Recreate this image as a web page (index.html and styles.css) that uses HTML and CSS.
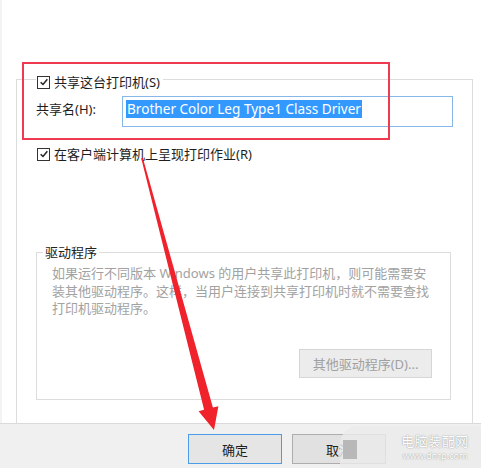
FILE: index.html
```html
<!DOCTYPE html>
<html lang="zh-CN">
<head>
<meta charset="utf-8">
<title>共享</title>
<link rel="stylesheet" href="styles.css">
</head>
<body>
<div class="page">
  <div class="main">
    <div class="panel">
      <div class="check-row legend">
        <span class="cb"><svg viewBox="0 0 12 12" width="10" height="10"><path d="M2 6.2 L4.8 9 L10 2.8" fill="none" stroke="#222" stroke-width="1.8"/></svg></span>
        <span class="label">共享这台打印机(S)</span>
      </div>
      <div class="name-row">
        <span class="name-label">共享名(H):</span>
        <div class="field"><span class="sel">Brother Color Leg Type1 Class Driver</span></div>
      </div>
      <div class="check-row render">
        <span class="cb"><svg viewBox="0 0 12 12" width="10" height="10"><path d="M2 6.2 L4.8 9 L10 2.8" fill="none" stroke="#222" stroke-width="1.8"/></svg></span>
        <span class="label">在客户端计算机上呈现打印作业(R)</span>
      </div>
      <div class="group">
        <div class="group-title">驱动程序</div>
        <p class="group-text">如果运行不同版本 Windows 的用户共享此打印机，则可能需要安<br>装其他驱动程序。这样，当用户连接到共享打印机时就不需要查找<br>打印机驱动程序。</p>
        <div class="group-actions"><span class="btn disabled">其他驱动程序(D)...</span></div>
      </div>
    </div>
  </div>
  <div class="footer">
    <span class="btn primary">确定</span>
    <span class="btn">取消</span>
  </div>

  <div class="highlight"></div>
  <svg class="arrow" width="481" height="468" viewBox="0 0 481 468">
    <polygon points="141.2,158.2 142.8,157.8 212.9,407.6 218.4,406.2 214,430 198.6,411.2 204.1,409.8" fill="#f0222c"/>
  </svg>
  <div class="watermark">
    <span class="wm-block"></span>
    <div class="wm-text">
      <span class="wm-name">电脑装配网</span>
      <span class="wm-url">www.dnzp.com</span>
    </div>
  </div>
</div>
</body>
</html>
```
FILE: styles.css
```css
* { box-sizing: border-box; }
html, body { margin: 0; padding: 0; background: #fff; }
body {
  font-family: "Noto Sans", "Noto Sans CJK SC", sans-serif;
  font-size: 13px;
  color: #1e1e1e;
}
.page {
  position: relative;
  width: 481px;
  height: 468px;
  display: flex;
  flex-direction: column;
  overflow: hidden;
}
.main {
  flex: 1;
  display: flex;
  padding: 79px 8px 0 14px;
  border-left: 2px solid #f3f3f3;
}
.panel {
  flex: 1;
  border: 1px solid #dcdcdc;
  border-bottom: none;
  display: flex;
  flex-direction: column;
}
.check-row {
  display: flex;
  align-items: center;
  gap: 4px;
  height: 18px;
  line-height: 18px;
}
.legend {
  margin: -7px 0 0 19px;
  padding: 0 3px 0 1px;
  background: #fff;
  align-self: flex-start;
}
.cb {
  width: 13px;
  height: 13px;
  border: 1px solid #333;
  background: #fff;
  display: flex;
  align-items: center;
  justify-content: center;
}
.name-row {
  display: flex;
  align-items: flex-start;
  margin: 5px 0 0 19px;
}
.name-label {
  width: 86px;
  line-height: 18px;
  margin-top: 4px;
}
.field {
  width: 331px;
  height: 31px;
  border: 1px solid #86b7e8;
  padding: 2px 3px 0;
  font-size: 13.6px;
}
.sel {
  display: inline-block;
  background: #3399ff;
  color: #fff;
  line-height: 18px;
  padding: 0 1px;
}
.render {
  margin: 18px 0 0 20px;
}
.group {
  margin: 89px 21px 0 19px;
  height: 148px;
  border: 1px solid #dcdcdc;
  display: flex;
  flex-direction: column;
}
.group-title {
  align-self: flex-start;
  margin: -10px 0 0 6px;
  padding: 0 2px;
  background: #fff;
  line-height: 18px;
  color: #222;
}
.group-text {
  margin: 4px 0 0 15px;
  line-height: 17.5px;
  color: #a2a2a2;
  white-space: nowrap;
}
.group-actions {
  display: flex;
  justify-content: flex-end;
  margin: 31px 18px 0 0;
}
.btn {
  display: flex;
  align-items: center;
  justify-content: center;
  height: 30px;
  border: 1px solid #adadad;
  background: #e1e1e1;
  color: #1e1e1e;
}
.btn.disabled {
  width: 133px;
  height: 29px;
  background: #ececec;
  border-color: #d6d6d6;
  color: #a0a0a0;
}
.footer {
  height: 45px;
  background: #f0f0f0;
  border-top: 1px solid #dadada;
  display: flex;
  gap: 10px;
  padding: 10px 0 0 188px;
}
.footer .btn { width: 94px; }
.btn.primary {
  border-color: #4d9de6;
  background: #e5e5e5;
}
.highlight {
  position: absolute;
  left: 22px;
  top: 62px;
  width: 368px;
  height: 78px;
  border: 2px solid #ef3b52;
}
.arrow {
  position: absolute;
  left: 0;
  top: 0;
  pointer-events: none;
}
.watermark {
  position: absolute;
  left: 340px;
  top: 426px;
  width: 141px;
  height: 42px;
  background: rgba(235, 235, 235, 0.8);
  border-top-left-radius: 18px;
}
.wm-block {
  position: absolute;
  left: 3px;
  top: 14px;
  width: 14px;
  height: 19px;
  background: #b8b8b8;
}
.wm-text {
  position: absolute;
  left: 58px;
  top: 8px;
  width: 74px;
  display: flex;
  flex-direction: column;
  align-items: center;
  gap: 3px;
  color: #fff;
  white-space: nowrap;
  text-shadow: 0 0 1px #9a9a9a, 0 0 2px #bbb;
}
.wm-name { font-size: 13px; line-height: 14px; letter-spacing: 0.5px; }
.wm-url { font-size: 9px; line-height: 10px; }
```
